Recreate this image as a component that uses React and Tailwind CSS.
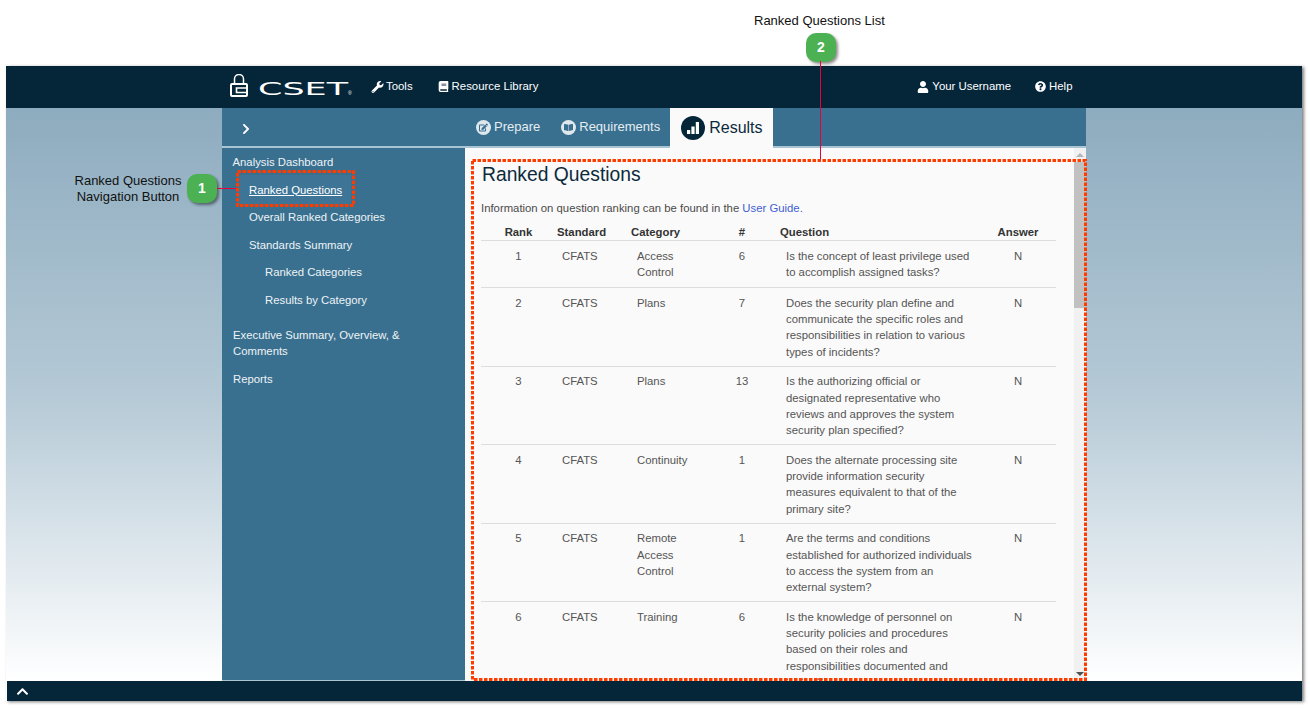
import React from 'react';
import { FaWrench, FaBook, FaUser, FaQuestionCircle, FaChevronRight, FaChevronUp, FaEdit, FaBookOpen } from 'react-icons/fa';

const rows = [
  { rank: 1, category: 'Access Control', num: 6, question: 'Is the concept of least privilege used to accomplish assigned tasks?' },
  { rank: 2, category: 'Plans', num: 7, question: 'Does the security plan define and communicate the specific roles and responsibilities in relation to various types of incidents?' },
  { rank: 3, category: 'Plans', num: 13, question: 'Is the authorizing official or designated representative who reviews and approves the system security plan specified?' },
  { rank: 4, category: 'Continuity', num: 1, question: 'Does the alternate processing site provide information security measures equivalent to that of the primary site?' },
  { rank: 5, category: 'Remote Access Control', num: 1, question: 'Are the terms and conditions established for authorized individuals to access the system from an external system?' },
  { rank: 6, category: 'Training', num: 6, question: 'Is the knowledge of personnel on security policies and procedures based on their roles and responsibilities documented and tested?' },
];

function Callout({ n, className }) {
  return (
    <div className={`absolute flex h-[29px] w-[30px] items-center justify-center rounded-[10px] bg-[#4cb152] text-[14px] font-bold text-white shadow-[2px_2px_3px_rgba(0,0,0,0.45)] ${className}`}>
      {n}
    </div>
  );
}

// dashed highlight frame drawn over the page
function Frame({ w, h, className }) {
  return (
    <svg width={w} height={h} className={`absolute ${className}`} fill="none">
      <rect x="1.500" y="1.500" width={w - 3} height={h - 3} stroke="#ff3c00" strokeWidth="3" strokeDasharray="3.500 1.500" />
    </svg>
  );
}

function Logo() {
  return (
    <div className="flex items-center gap-[9px]">
      <svg width="19" height="24" viewBox="0 0 19 24" fill="none" stroke="white" className="-mt-[3px]">
        <path d="M4.500 10V5a4.500 4.500 0 0 1 9 0v5" strokeWidth="1.500" />
        <rect x="1" y="10" width="16" height="12" rx="1" strokeWidth="2" />
        <path d="M17 14H6.500v4.500H17" strokeWidth="1.600" />
      </svg>
      <svg width="96" height="20" viewBox="0 0 96 20" className="mt-[3px]">
        <text x="0" y="16" fontFamily="DejaVu Sans" fontSize="17" fill="white" textLength="90" lengthAdjust="spacingAndGlyphs">CSET</text>
        <text x="90" y="16" fontFamily="Liberation Sans" fontSize="5" fill="white">®</text>
      </svg>
    </div>
  );
}

function SideLink({ className = '', children }) {
  return <div className={`text-[11.330px] leading-[16px] text-[#eef3f6] ${className}`}>{children}</div>;
}

export default function App() {
  return (
    <div className="relative h-[710px] w-[1310px] overflow-hidden bg-white font-['Liberation_Sans',Arial,sans-serif]">
      <div className="pt-[66px] pr-[8px] pb-[9px] pl-[6px]">
        <div className="flex h-[635px] flex-col shadow-[2px_1px_3px_rgba(0,0,0,0.5)]">
          {/* top bar */}
          <header className="flex h-[42px] shrink-0 items-center bg-[#052639] pl-[224px] text-[11.400px] text-white">
            <Logo />
            <div className="ml-[17px] flex items-center gap-[2px]"><FaWrench className="w-[13px] text-[12px]" /> Tools</div>
            <div className="ml-[25px] flex items-center gap-[3px]"><FaBook className="text-[11px]" /> Resource Library</div>
            <div className="ml-[379px] flex items-center gap-[3px]"><FaUser className="text-[12px]" /> Your Username</div>
            <div className="ml-[24px] flex items-center gap-[3px]"><FaQuestionCircle className="text-[11px]" /> Help</div>
          </header>

          <div className="flex min-h-0 flex-1 bg-gradient-to-b from-[#8eacbf] via-[#b5c9d6] via-50% to-white pl-[216px]">
            <div className="flex w-[864px] flex-col">
              {/* tab bar */}
              <div className="flex h-[40px] shrink-0 items-end border-b-[2px] border-[#a9c4d3] bg-[#39708f]">
                <div className="flex h-[38px] w-[243px] items-center pl-[18px] pt-[4px] text-white"><FaChevronRight className="text-[12px]" /></div>
                <div className="flex h-[38px] items-center gap-[3px] pl-[11px] text-[13px] text-[#e4edf2]">
                  <span className="flex h-[15px] w-[15px] items-center justify-center rounded-full bg-[#dfe8ed] text-[9px] text-[#39708f]"><FaEdit /></span>
                  Prepare
                </div>
                <div className="ml-[21px] flex h-[38px] items-center gap-[3px] text-[13px] text-[#e4edf2]">
                  <span className="flex h-[15px] w-[15px] items-center justify-center rounded-full bg-[#dfe8ed] text-[9px] text-[#39708f]"><FaBookOpen /></span>
                  Requirements
                </div>
                <div className="-mb-[2px] ml-[10px] flex h-[40px] w-[103px] items-center gap-[4px] bg-[#fafafa] pl-[11px] text-[16px] text-[#0c2a3c]">
                  <span className="flex h-[24px] w-[24px] items-center justify-center rounded-full bg-[#052639]">
                    <svg width="14" height="14" viewBox="0 0 14 14" fill="white">
                      <rect x="1" y="9" width="3.200" height="4" />
                      <rect x="5.400" y="5.500" width="3.200" height="7.500" />
                      <rect x="9.800" y="1" width="3.200" height="12" />
                    </svg>
                  </span>
                  Results
                </div>
              </div>

              <div className="flex min-h-0 flex-1">
                {/* sidebar */}
                <nav className="w-[243px] shrink-0 border-b border-[#a9c4d3] bg-[#39708f] pt-[6px]">
                  <SideLink className="pl-[10.500px]">Analysis Dashboard</SideLink>
                  <SideLink className="-mb-[7px] ml-[16px] mt-[4.500px] w-[113px] bg-[#3e7597] py-[7px] pl-[11px]"><span className="text-white underline">Ranked Questions</span></SideLink>
                  <SideLink className="mt-[11.500px] pl-[27px]">Overall Ranked Categories</SideLink>
                  <SideLink className="mt-[11.500px] pl-[27px]">Standards Summary</SideLink>
                  <SideLink className="mt-[11.500px] pl-[43px]">Ranked Categories</SideLink>
                  <SideLink className="mt-[11.500px] pl-[43px]">Results by Category</SideLink>
                  <SideLink className="mt-[19.500px] pl-[11px] pr-[50px]">Executive Summary, Overview, &amp; Comments</SideLink>
                  <SideLink className="mt-[11.500px] pl-[11px]">Reports</SideLink>
                </nav>

                {/* main panel */}
                <main className="flex min-w-0 flex-1 overflow-hidden bg-[#fafafa]">
                  <div className="h-[532px] w-[609px] shrink-0 overflow-hidden pl-[16px] pt-[15px]">
                    <h1 className="ml-px text-[19.300px] leading-[24px] text-[#0c2a3c]">Ranked Questions</h1>
                    <p className="mt-[13px] text-[11.330px] leading-[16px] text-[#4a4a4a]">
                      Information on question ranking can be found in the <span className="text-[#3f5fd0]">User Guide.</span>
                    </p>
                    <table className="mt-[8px] w-[575px] table-fixed border-collapse text-[11.330px] leading-[16.250px] text-[#555]">
                      <colgroup>
                        <col className="w-[75px]" />
                        <col className="w-[75px]" />
                        <col className="w-[81px]" />
                        <col className="w-[60px]" />
                        <col className="w-[208px]" />
                        <col className="w-[76px]" />
                      </colgroup>
                      <thead>
                        <tr className="border-b border-[#ddd] font-bold text-[#333]">
                          <th className="text-center">Rank</th>
                          <th className="pl-px text-left">Standard</th>
                          <th className="text-left">Category</th>
                          <th className="text-center">#</th>
                          <th className="pl-[8px] text-left">Question</th>
                          <th className="text-center">Answer</th>
                        </tr>
                      </thead>
                      <tbody>
                        {rows.map((r) => (
                          <tr key={r.rank} className="h-[47px] border-b border-[#ddd] align-top">
                            <td className="pb-[6px] pt-[6.500px] text-center">{r.rank}</td>
                            <td className="pb-[6px] pl-[6px] pt-[6.500px]">CFATS</td>
                            <td className="pb-[6px] pl-[6px] pr-[20px] pt-[6.500px]">{r.category}</td>
                            <td className="pb-[6px] pt-[6.500px] text-center">{r.num}</td>
                            <td className="pb-[6px] pl-[14px] pr-[4px] pt-[6.500px]">{r.question}</td>
                            <td className="pb-[6px] pt-[6.500px] text-center">N</td>
                          </tr>
                        ))}
                      </tbody>
                    </table>
                  </div>
                  {/* scrollbar */}
                  <div className="flex h-[533px] w-[12px] shrink-0 flex-col bg-[#f1f1f1]">
                    <div className="flex h-[14px] items-center justify-center"><div className="h-0 w-0 border-x-[4px] border-b-[4px] border-x-transparent border-b-[#b5b5b5]" /></div>
                    <div className="h-[146px] bg-[#c1c1c1]" />
                    <div className="flex-1" />
                    <div className="flex h-[14px] items-center justify-center"><div className="h-0 w-0 border-x-[4px] border-t-[4px] border-x-transparent border-t-[#505050]" /></div>
                  </div>
                </main>
              </div>
            </div>
          </div>

          {/* footer */}
          <footer className="ml-px flex h-[20px] shrink-0 items-center bg-[#052639] pl-[9px] text-[13px] text-white">
            <FaChevronUp />
          </footer>
        </div>
      </div>

      {/* annotations over the screenshot */}
      <div className="absolute left-[754px] top-[13px] text-[13px] leading-[15px] text-[#111]">Ranked Questions List</div>
      <div className="absolute left-[60px] top-[173px] w-[136px] text-center text-[13px] leading-[16px] text-[#111]">Ranked Questions<br />Navigation Button</div>
      <Callout n="1" className="left-[187px] top-[174px]" />
      <Callout n="2" className="left-[806px] top-[33px]" />
      <div className="absolute left-[217px] top-[188px] h-px w-[20px] bg-[#e8003c]" />
      <div className="absolute left-[820px] top-[61px] h-[99px] w-px bg-[#e8003c]" />
      <Frame w={119} h={37} className="left-[236px] top-[170px]" />
      <Frame w={616} h={522} className="left-[471px] top-[159px]" />
    </div>
  );
}
